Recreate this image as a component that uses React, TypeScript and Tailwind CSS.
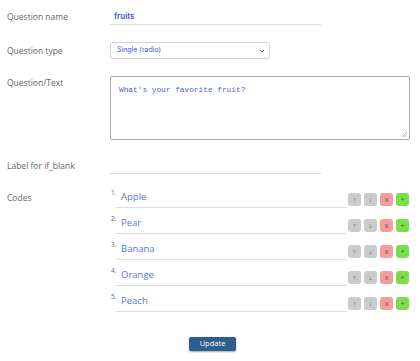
import React from 'react';

const codes = ['Apple', 'Pear', 'Banana', 'Orange', 'Peach'];

function Label({ children, top }: { children: React.ReactNode; top?: boolean }) {
  return (
    <div
      className={`w-[110px] shrink-0 pl-[7px] text-[8.5px] leading-[12px] text-[#666] ${top ? 'pt-[1px]' : ''}`}
    >
      {children}
    </div>
  );
}

function CodeRow({ n, value }: { n: number; value: string }) {
  return (
    <div className="flex h-[26px] items-end">
      <span className="w-[6px] self-start pl-[1px] pt-[7px] text-[6.5px] leading-[8px] text-[#666]">{n}.</span>
      <div className="flex h-full flex-1 items-end border-b border-[#ddd] pb-[3px] pl-[5px] text-[9.5px] leading-[14px] text-[#5a76d4]">
        {value}
      </div>
      <div className="mb-[2px] ml-[1px] flex gap-[3px] text-[7px] leading-none text-[#555]">
        <span className="flex h-[13px] w-[13px] items-center justify-center rounded-[3px] bg-[#cbcbcb]">↑</span>
        <span className="flex h-[13px] w-[13px] items-center justify-center rounded-[3px] bg-[#cbcbcb]">↓</span>
        <span className="flex h-[13px] w-[13px] items-center justify-center rounded-[3px] bg-[#f59c9c]">x</span>
        <span className="flex h-[13px] w-[13px] items-center justify-center rounded-[3px] bg-[#79e04a]">+</span>
      </div>
    </div>
  );
}

export default function App() {
  return (
    <div className="h-[361px] w-[420px] bg-white pt-[8px] font-['Open_Sans',sans-serif]">
      {/* Question name */}
      <div className="flex items-center">
        <Label>Question name</Label>
        <div className="flex h-[17px] w-[211px] items-center border-b border-[#ddd] pl-[4px] font-['Inter',sans-serif] text-[8px] font-semibold text-[#4455cc]">
          fruits
        </div>
      </div>

      {/* Question type */}
      <div className="mt-[17px] flex items-center">
        <Label>Question type</Label>
        <div className="flex h-[17px] w-[160px] items-center justify-between rounded-[3px] border border-[#d4d4d4] pl-[6px] pr-[4px] font-['Inter',sans-serif] text-[7px] text-[#4455cc] shadow-[0_1px_1px_rgba(0,0,0,0.06)]">
          <span>Single (radio)</span>
          <svg width="6" height="4" viewBox="0 0 6 4" className="text-[#667]">
            <path d="M1 1l2 2 2-2" fill="none" stroke="currentColor" strokeWidth="0.9" />
          </svg>
        </div>
      </div>

      {/* Question/Text */}
      <div className="mt-[17px] flex items-start">
        <Label top>Question/Text</Label>
        <div className="relative h-[64px] w-[300px] rounded-[2px] border border-[#aaa] px-[8px] pt-[8px] font-['Liberation_Mono',monospace] text-[7.8px] leading-[10px] text-[#4a63d0]">
          What's your favorite fruit?
          <svg width="5" height="5" viewBox="0 0 5 5" className="absolute bottom-[2px] right-[2px]">
            <path d="M5 0L0 5M5 2.5L2.5 5" stroke="#999" strokeWidth="0.8" />
          </svg>
        </div>
      </div>

      {/* Label for if_blank */}
      <div className="mt-[17px] flex items-center">
        <Label>Label for if_blank</Label>
        <div className="h-[17px] w-[211px] border-b border-[#ddd]" />
      </div>

      {/* Codes */}
      <div className="mt-[8px] flex items-start">
        <div className="w-[110px] shrink-0 pl-[7px] pt-[10px] text-[8.5px] leading-[12px] text-[#666]">Codes</div>
        <div className="w-[299px]">
          {codes.map((c, i) => (
            <CodeRow key={c} n={i + 1} value={c} />
          ))}
        </div>
      </div>

      <div className="mt-[25px] flex justify-center pl-[5px]">
        <button className="h-[14px] w-[47px] rounded-[2px] bg-[#2e5d8e] text-[7.5px] leading-none text-white shadow-[0_1px_2px_rgba(0,0,0,0.35)]">
          Update
        </button>
      </div>
    </div>
  );
}
